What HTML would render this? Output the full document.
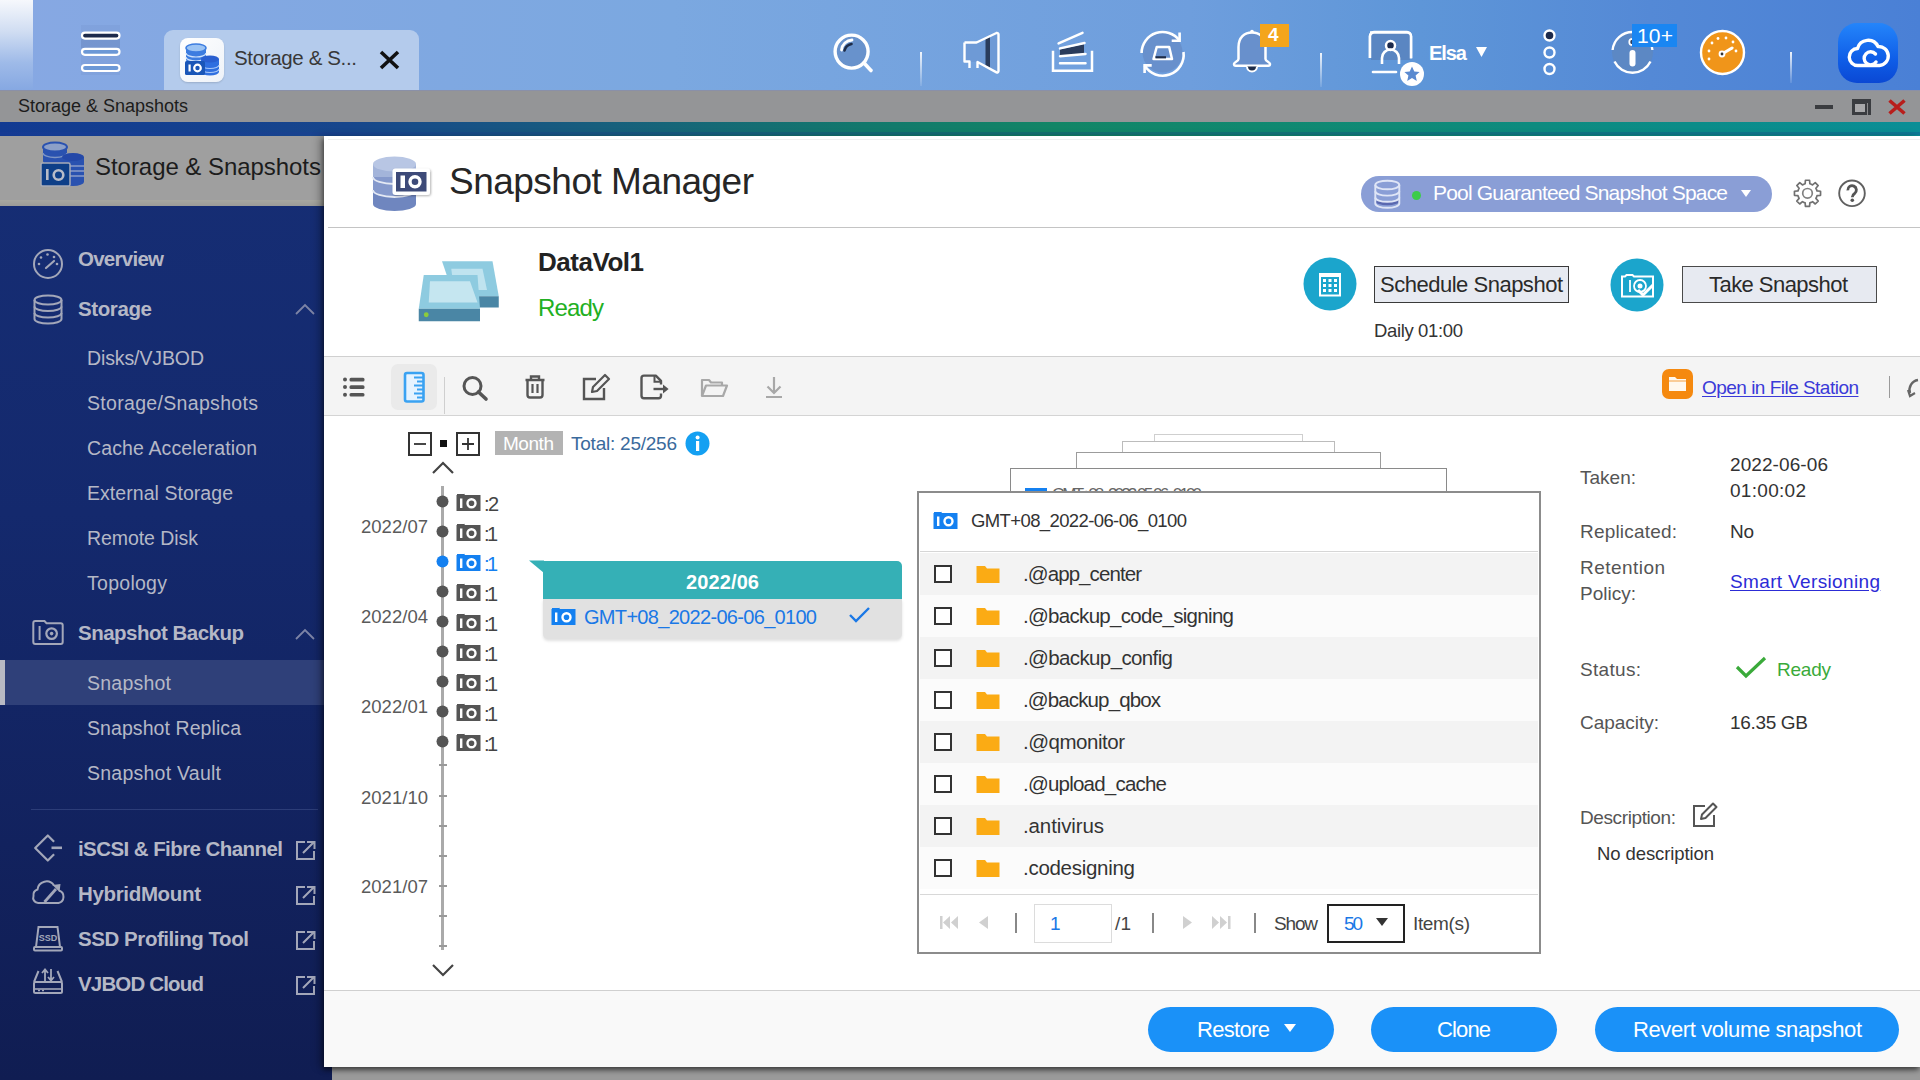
<!DOCTYPE html>
<html><head><meta charset="utf-8">
<style>
*{margin:0;padding:0;box-sizing:border-box}
html,body{width:1920px;height:1080px;overflow:hidden;background:#9a9a9a;font-family:"Liberation Sans",sans-serif;position:relative}
.a{position:absolute}
.t{position:absolute;white-space:nowrap;line-height:1}
svg{position:absolute;overflow:visible}
</style></head><body>
<div class="a" style="left:0px;top:0px;width:1920px;height:90px;background:linear-gradient(90deg,#87a8e3 0%,#7ba8e0 35%,#6e9edd 62%,#5e96d8 74%,#5489d6 86%,#4a80d6 100%);"></div>
<div class="a" style="left:0px;top:0px;width:33px;height:90px;background:linear-gradient(180deg,#f6f8fc 0%,#d0ddf2 35%,#9ebae8 70%,#86a8e2 100%);"></div>
<div class="a" style="left:81px;top:25px;width:39px;height:50px;background:rgba(40,60,110,.05);"></div>
<div class="a" style="left:81px;top:39px;width:39px;height:9px;background:rgba(40,60,110,.12);"></div>
<svg style="left:78px;top:30px;" width="46" height="46" viewBox="0 0 46 46"><rect x="4" y="2.6" width="37.5" height="6" rx="3" fill="#1c2a4c" stroke="#fff" stroke-width="2.2"/>
<rect x="4" y="18.8" width="37.5" height="6" rx="3" fill="#6c98d6" stroke="#fff" stroke-width="2.2"/>
<rect x="4" y="35" width="37.5" height="6" rx="3" fill="#6c98d6" stroke="#fff" stroke-width="2.2"/></svg>
<div class="a" style="left:164px;top:30px;width:255px;height:60px;background:#b4cbec;border-radius:9px 9px 0 0"></div>
<div class="a" style="left:180px;top:38px;width:44px;height:44px;background:linear-gradient(135deg,#ffffff,#eef2f8);border-radius:8px;box-shadow:0 1px 2px rgba(0,0,0,.15)"></div>
<svg style="left:180px;top:38px;" width="44" height="44" viewBox="0 0 44 44"><path d="M6,10 v12 a10,4 0 0 0 20,0 v-12 z" fill="#3d7de0"/>
<ellipse cx="16" cy="10" rx="10" ry="4" fill="#9cc4f4" stroke="#3d7de0" stroke-width="1.5"/>
<path d="M6,15 a10,4 0 0 0 20,0 M6,19 a10,4 0 0 0 20,0" fill="none" stroke="#cfe2fb" stroke-width="1.2"/>
<path d="M21,21 v13 a9,3.5 0 0 0 18,0 v-13 z" fill="#2f6fe0"/>
<ellipse cx="30" cy="21" rx="9" ry="3.5" fill="#2a5fd0"/>
<path d="M21,27 a9,3.5 0 0 0 18,0 M21,31 a9,3.5 0 0 0 18,0" fill="none" stroke="#a8c8f8" stroke-width="1.2"/>
<rect x="5" y="23" width="20" height="14" rx="1.5" fill="#1a56b8"/>
<rect x="8.5" y="26.5" width="2.2" height="7" fill="#fff"/><circle cx="17.5" cy="30" r="3.3" fill="none" stroke="#fff" stroke-width="2.2"/></svg>
<div id="t0" class="t" style="left:234px;top:48.25px;font-size:20.5px;color:#383838;font-weight:400;letter-spacing:-0.356px;">Storage &amp; S...</div>
<svg style="left:379px;top:50px;" width="21" height="20" viewBox="0 0 21 20"><path d="M2,2 L19,18 M19,2 L2,18" stroke="#111" stroke-width="3.6"/></svg>
<svg style="left:828px;top:28px;" width="50" height="50" viewBox="0 0 50 50"><circle cx="23.6" cy="23.6" r="16.5" fill="#6892cc" stroke="#fff" stroke-width="3.4"/>
<path d="M13.5,22 a11,11 0 0 1 10.5,-10" fill="none" stroke="#fff" stroke-width="2.8" stroke-linecap="round"/>
<path d="M16.5,22.5 a9,9 0 0 1 7,-6.5" fill="none" stroke="#1e2c48" stroke-width="2.6" stroke-linecap="round"/>
<path d="M36,35 L43,42.5" stroke="#fff" stroke-width="3.6" stroke-linecap="round"/></svg>
<div class="a" style="left:920px;top:52px;width:2px;height:34px;background:linear-gradient(180deg,rgba(255,255,255,.9),rgba(255,255,255,.1));"></div>
<svg style="left:960px;top:30px;" width="44" height="46" viewBox="0 0 44 46"><path d="M4.5,12.5 H16.5 L36.5,3 a1.5,1.5 0 0 1 2,1.4 V41 a1.5,1.5 0 0 1 -2,1.4 L17,32 H4.5 Z" fill="#6e9ad6"/>
<path d="M25.5,8 L30,6 V38 L25.5,35.5 Z" fill="#2a3c5c"/>
<path d="M4.5,12.5 H16.5 L36.5,3 a1.5,1.5 0 0 1 2,1.4 V41 a1.5,1.5 0 0 1 -2,1.4 L17.5,32 V38 M9.5,38 V31.5 H4.5 V12.5" fill="none" stroke="#fff" stroke-width="2.4" stroke-linejoin="round"/></svg>
<svg style="left:1050px;top:30px;" width="46" height="44" viewBox="0 0 46 44"><path d="M3,20.8 V40.7 H42 V20.8" fill="none" stroke="#fff" stroke-width="2.5"/>
<path d="M10,19.5 L34,14 V23.5 L10,26 Z" fill="#2a3c5c"/>
<path d="M8.6,13.4 L32.5,2.8 M10,18.4 L34.5,13 M10,26.2 L35.5,23.9 M10,33.3 H35.5" stroke="#fff" stroke-width="2.5" stroke-linecap="round"/></svg>
<svg style="left:1136px;top:26px;" width="52" height="52" viewBox="0 0 52 52"><circle cx="26.5" cy="26.5" r="20" fill="#6890cc"/>
<path d="M5.6,27 A21,21 0 0 1 43.5,14.5" fill="none" stroke="#fff" stroke-width="2.6"/>
<path d="M43.6,6.5 V14.8 H35.7" fill="none" stroke="#fff" stroke-width="2.6"/>
<path d="M47.5,26 A21,21 0 0 1 8.6,39.4" fill="none" stroke="#fff" stroke-width="2.6"/>
<path d="M8.6,47 V39.4 H15.7" fill="none" stroke="#fff" stroke-width="2.6"/>
<path d="M20.7,21 H33.2 L36,33 H17.5 Z" fill="#6890cc" stroke="#fff" stroke-width="2.5" stroke-linejoin="round"/>
<path d="M19.5,31.3 H30" stroke="#1e2c48" stroke-width="2.2"/></svg>
<svg style="left:1228px;top:28px;" width="48" height="50" viewBox="0 0 48 50"><path d="M10.5,31 V19 C10.5,9.5 16.5,4.5 24,4.5 C31.5,4.5 37.5,9.5 37.5,19 V31 C37.5,33.5 42,34 42,36 a1.8,1.8 0 0 1 -1.8,1.8 H7.8 a1.8,1.8 0 0 1 -1.8,-1.8 C6,34 10.5,33.5 10.5,31 Z" fill="#6890cc" stroke="#fff" stroke-width="2.5" stroke-linejoin="round"/>
<path d="M19,38.5 a5,5 0 0 0 10,0" fill="#1e2c48" stroke="#fff" stroke-width="2"/>
<circle cx="24" cy="3.5" r="1.8" fill="#fff"/></svg>
<div class="a" style="left:1260px;top:24px;width:29px;height:23px;background:#f4a51c;"></div>
<div id="t1" class="t" style="left:1268px;top:25.42px;font-size:19px;color:#fff;font-weight:700;">4</div>
<div class="a" style="left:1320px;top:53px;width:2px;height:34px;background:linear-gradient(180deg,rgba(255,255,255,.9),rgba(255,255,255,.1));"></div>
<svg style="left:1366px;top:28px;" width="60" height="60" viewBox="0 0 60 60"><path d="M4,30 V8 a4,4 0 0 1 4,-4 h33 a4,4 0 0 1 4,4 V30" fill="#5a86c2" stroke="#fff" stroke-width="2.5"/>
<rect x="5" y="5" width="39" height="27" fill="#5a86c2"/>
<path d="M4,4.5 h37 a4,4 0 0 1 4,4 v22 M4,30 V8.5 a4,4 0 0 1 4,-4" fill="none" stroke="#fff" stroke-width="2.5"/>
<circle cx="24.5" cy="17.5" r="4.5" fill="#1c2a4c" stroke="#fff" stroke-width="2.5"/>
<path d="M16,36 v-6 a8.5,8.5 0 0 1 17,0 v6" fill="none" stroke="#fff" stroke-width="2.6"/>
<path d="M7,44 H30" stroke="#fff" stroke-width="2.6" stroke-linecap="round"/>
<circle cx="46" cy="46" r="12" fill="#fff"/>
<path d="M46,38.5 l2.3,5 5.3,.5 -4,3.6 1.2,5.3 -4.8,-2.8 -4.8,2.8 1.2,-5.3 -4,-3.6 5.3,-.5 z" fill="#5a8ad0"/></svg>
<div id="t2" class="t" style="left:1429px;top:43.07px;font-size:20px;color:#fff;font-weight:700;letter-spacing:-1.052px;">Elsa</div>
<svg style="left:1476px;top:47px;" width="12" height="11" viewBox="0 0 12 11"><path d="M0,0 H11 L5.5,10 Z" fill="#fff"/></svg>
<svg style="left:1540px;top:26px;" width="20" height="52" viewBox="0 0 20 52"><circle cx="9.5" cy="9.5" r="5" fill="#1c2a4c" stroke="#fff" stroke-width="2.4"/>
<circle cx="9.5" cy="26.5" r="5" fill="none" stroke="#fff" stroke-width="2.4"/>
<circle cx="9.5" cy="43" r="5" fill="none" stroke="#fff" stroke-width="2.4"/></svg>
<svg style="left:1606px;top:26px;" width="54" height="54" viewBox="0 0 54 54"><circle cx="26.5" cy="26.5" r="20.5" fill="#5c88c4"/>
<path d="M6.6,24 A20,20 0 0 1 46.4,24 M44.5,35.5 A20,20 0 0 1 8.5,35.5" fill="none" stroke="#fff" stroke-width="2.4"/>
<rect x="23.5" y="24" width="6" height="16.5" rx="3" fill="#fff"/>
<circle cx="26.5" cy="16" r="3.2" fill="#2a3c5c" stroke="#fff" stroke-width="1.8"/></svg>
<div class="a" style="left:1632px;top:24px;width:45px;height:23px;background:#1a86f2;"></div>
<div id="t3" class="t" style="left:1637px;top:24.72px;font-size:21px;color:#fff;font-weight:400;letter-spacing:0.188px;">10+</div>
<svg style="left:1698px;top:28px;" width="50" height="50" viewBox="0 0 50 50"><circle cx="24.5" cy="24.5" r="21.5" fill="#f0951a" stroke="#fff" stroke-width="2.4"/>
<path d="M24,26 L34,20" stroke="#fff" stroke-width="3" stroke-linecap="round"/>
<circle cx="24" cy="26" r="3.4" fill="#fff"/><circle cx="24" cy="26" r="1.4" fill="#333"/>
<g fill="#fff"><circle cx="11" cy="23" r="1.4"/><circle cx="14" cy="15" r="1.4"/><circle cx="20" cy="10.5" r="1.4"/><circle cx="28" cy="10" r="1.4"/><circle cx="35" cy="14" r="1.4"/><circle cx="11" cy="31" r="1.4"/><circle cx="38" cy="23" r="1.4"/></g></svg>
<div class="a" style="left:1790px;top:52px;width:2px;height:31px;background:linear-gradient(180deg,rgba(255,255,255,.9),rgba(255,255,255,.1));"></div>
<div class="a" style="left:1838px;top:23px;width:60px;height:60px;background:linear-gradient(180deg,#2485fa 0%,#0f5ee8 60%,#0a48d4 100%);border-radius:19px"></div>
<svg style="left:1838px;top:23px;" width="60" height="60" viewBox="0 0 60 60"><path d="M20,42.5 a8.5,8.5 0 0 1 -0.5,-17 a11,11 0 0 1 20.5,-2 a8.5,8.5 0 0 1 1.5,19 z" fill="none" stroke="#fff" stroke-width="3.4" stroke-linejoin="round"/>
<path d="M37.5,31 a6.5,6.5 0 1 0 0.5,8" fill="none" stroke="#fff" stroke-width="3.4" stroke-linecap="round"/></svg>
<div class="a" style="left:0px;top:90px;width:1920px;height:32px;background:#949597;"></div>
<div class="a" style="left:0px;top:90px;width:1920px;height:1px;background:#8a90a8;"></div>
<div id="t4" class="t" style="left:18px;top:97.26px;font-size:18px;color:#1c1c1c;font-weight:400;letter-spacing:-0.007px;">Storage &amp; Snapshots</div>
<div class="a" style="left:1815px;top:105px;width:18px;height:4px;background:#3a3c40;"></div>
<div class="a" style="left:1852px;top:99px;width:19px;height:16px;background:#3a3c40;"></div>
<div class="a" style="left:1855px;top:104px;width:10px;height:8px;background:#a8a8aa;"></div>
<div class="a" style="left:1867px;top:103px;width:1px;height:12px;background:#8a8a8c;"></div>
<svg style="left:1886px;top:98px;" width="22" height="18" viewBox="0 0 22 18"><path d="M3.5,2.5 L18.5,15.5 M18.5,2.5 L3.5,15.5" stroke="#b81e1c" stroke-width="3.6"/></svg>
<div class="a" style="left:0px;top:122px;width:1920px;height:14px;background:linear-gradient(90deg,#123a92 0%,#17468c 18%,#17607c 32%,#12786c 45%,#128566 55%,#0f8a76 72%,#0b8c88 88%,#0a8e96 100%);"></div>
<div class="a" style="left:0px;top:132px;width:1920px;height:3px;background:rgba(30,60,150,.25);"></div>
<div class="a" style="left:0px;top:136px;width:332px;height:944px;background:linear-gradient(180deg,#162e75 0%,#14296d 40%,#12225e 75%,#101d52 100%);"></div>
<div class="a" style="left:0px;top:136px;width:324px;height:70px;background:#9f9f9f;"></div>
<div class="a" style="left:0px;top:200px;width:324px;height:6px;background:linear-gradient(180deg,#a8a8a0,#9c9c98);"></div>
<svg style="left:38px;top:140px;" width="50" height="52" viewBox="0 0 50 52"><path d="M5,7 v14 a12,4.5 0 0 0 24,0 v-14 z" fill="#2a52b0"/>
<ellipse cx="17" cy="7" rx="12" ry="4.5" fill="#8ca0c8" stroke="#2a52b0" stroke-width="2"/>
<path d="M5,13 a12,4.5 0 0 0 24,0" fill="none" stroke="#7e95c4" stroke-width="1.4"/>
<path d="M24,17 v25 a11,4 0 0 0 22,0 v-25 z" fill="#2a52b0"/>
<ellipse cx="35" cy="17" rx="11" ry="4" fill="#2448a8"/>
<path d="M32,26 h14 M32,31 h14 M32,36 h14" stroke="#8a9cc8" stroke-width="1.6"/>
<rect x="3" y="23" width="29" height="23" rx="1.5" fill="#0e3f88" stroke="#a8acb8" stroke-width="1.5"/>
<rect x="8" y="29" width="2.6" height="11" fill="#b8bcc8"/><circle cx="20.5" cy="35" r="4.8" fill="none" stroke="#b8bcc8" stroke-width="2.6"/></svg>
<div id="t5" class="t" style="left:95px;top:154.68px;font-size:24px;color:#1c1c1c;font-weight:400;letter-spacing:-0.046px;">Storage &amp; Snapshots</div>
<svg style="left:30px;top:246px;" width="36" height="36" viewBox="0 0 36 36"><circle cx="18" cy="18" r="14" fill="none" stroke="#a3a7b9" stroke-width="2"/>
<g fill="#a3a7b9"><circle cx="9" cy="18" r="1.3"/><circle cx="11" cy="11.5" r="1.3"/><circle cx="17.5" cy="8.5" r="1.3"/><circle cx="24" cy="11" r="1.3"/><circle cx="27" cy="18" r="1.3"/></g>
<path d="M16,22 L24,15" stroke="#a3a7b9" stroke-width="2.2" stroke-linecap="round"/></svg>
<div id="t6" class="t" style="left:78px;top:249.45px;font-size:20.5px;color:#b5b8c6;font-weight:700;letter-spacing:-0.739px;">Overview</div>
<svg style="left:30px;top:292px;" width="36" height="36" viewBox="0 0 36 36"><g fill="none" stroke="#a3a7b9" stroke-width="2"><ellipse cx="18" cy="8" rx="13.5" ry="4.5"/>
<path d="M4.5,8 v19 a13.5,4.5 0 0 0 27,0 v-19"/><path d="M4.5,14.5 a13.5,4.5 0 0 0 27,0 M4.5,21 a13.5,4.5 0 0 0 27,0"/></g></svg>
<div id="t7" class="t" style="left:78px;top:299.15px;font-size:20.5px;color:#b5b8c6;font-weight:700;letter-spacing:-0.388px;">Storage</div>
<svg style="left:294px;top:300px;" width="22" height="18" viewBox="0 0 22 18"><path d="M2,14 L11,5 L20,14" fill="none" stroke="#7d84a6" stroke-width="1.8"/></svg>
<div id="t8" class="t" style="left:87px;top:349.49px;font-size:19.5px;color:#b5b8c6;font-weight:400;letter-spacing:-0.111px;">Disks/VJBOD</div>
<div id="t9" class="t" style="left:87px;top:394.49px;font-size:19.5px;color:#b5b8c6;font-weight:400;letter-spacing:0.320px;">Storage/Snapshots</div>
<div id="t10" class="t" style="left:87px;top:439.49px;font-size:19.5px;color:#b5b8c6;font-weight:400;letter-spacing:0.116px;">Cache Acceleration</div>
<div id="t11" class="t" style="left:87px;top:484.49px;font-size:19.5px;color:#b5b8c6;font-weight:400;letter-spacing:0.049px;">External Storage</div>
<div id="t12" class="t" style="left:87px;top:529.49px;font-size:19.5px;color:#b5b8c6;font-weight:400;letter-spacing:-0.062px;">Remote Disk</div>
<div id="t13" class="t" style="left:87px;top:574.49px;font-size:19.5px;color:#b5b8c6;font-weight:400;letter-spacing:0.277px;">Topology</div>
<svg style="left:30px;top:618px;" width="36" height="30" viewBox="0 0 36 30"><path d="M3.3,24 V5 a2,2 0 0 1 2,-2 H14.5 l2,2.2 H30.7 a2,2 0 0 1 2,2 V24 a2,2 0 0 1 -2,2 H5.3 a2,2 0 0 1 -2,-2 Z" fill="none" stroke="#a3a7b9" stroke-width="2"/>
<path d="M9.6,8 V22" stroke="#a3a7b9" stroke-width="2"/><circle cx="21.6" cy="15.6" r="5.3" fill="none" stroke="#a3a7b9" stroke-width="2.2"/><circle cx="21.6" cy="15.6" r="1.8" fill="#a3a7b9"/></svg>
<div id="t14" class="t" style="left:78px;top:623.15px;font-size:20.5px;color:#b5b8c6;font-weight:700;letter-spacing:-0.510px;">Snapshot Backup</div>
<svg style="left:294px;top:625px;" width="22" height="18" viewBox="0 0 22 18"><path d="M2,14 L11,5 L20,14" fill="none" stroke="#7d84a6" stroke-width="1.8"/></svg>
<div class="a" style="left:0px;top:660px;width:324px;height:45px;background:#2f4079;"></div>
<div class="a" style="left:0px;top:660px;width:5px;height:45px;background:#b8bac4;"></div>
<div id="t15" class="t" style="left:87px;top:674.49px;font-size:19.5px;color:#b5b8c6;font-weight:400;letter-spacing:0.228px;">Snapshot</div>
<div id="t16" class="t" style="left:87px;top:719.49px;font-size:19.5px;color:#b5b8c6;font-weight:400;letter-spacing:0.076px;">Snapshot Replica</div>
<div id="t17" class="t" style="left:87px;top:764.49px;font-size:19.5px;color:#b5b8c6;font-weight:400;letter-spacing:0.244px;">Snapshot Vault</div>
<div class="a" style="left:31px;top:809px;width:287px;height:1px;background:#2c3d78;"></div>
<svg style="left:30px;top:832px;" width="36" height="32" viewBox="0 0 36 32"><path d="M24.1,9.8 L17.8,3.5 L5.2,16 L17.8,28.5 L24.1,22.2" fill="none" stroke="#a3a7b9" stroke-width="2.2" stroke-linejoin="round"/>
<path d="M21.5,15.8 H32" stroke="#a3a7b9" stroke-width="2.6"/></svg>
<div id="t18" class="t" style="left:78px;top:839.15px;font-size:20.5px;color:#b5b8c6;font-weight:700;letter-spacing:-0.571px;">iSCSI &amp; Fibre Channel</div>
<svg style="left:30px;top:876px;" width="36" height="32" viewBox="0 0 36 32"><path d="M8,27 a5.2,5.2 0 0 1 -4.5,-7 a6,6 0 0 1 4,-6.5 a9,9 0 0 1 16.5,-4 M29,14.5 a6.5,6.5 0 0 1 -0.5,12.5 H8" fill="none" stroke="#a3a7b9" stroke-width="2"/>
<path d="M14.5,26 L26,13" stroke="#a3a7b9" stroke-width="2.8"/><path d="M22.5,9 L30.5,8 L29.5,16 Z" fill="#a3a7b9"/></svg>
<div id="t19" class="t" style="left:78px;top:884.15px;font-size:20.5px;color:#b5b8c6;font-weight:700;letter-spacing:-0.341px;">HybridMount</div>
<svg style="left:30px;top:922px;" width="36" height="32" viewBox="0 0 36 32"><path d="M6,25 L8.5,5 H27.5 L30,25 Z" fill="none" stroke="#a3a7b9" stroke-width="2"/>
<rect x="4" y="25" width="28" height="3.5" rx="1" fill="none" stroke="#a3a7b9" stroke-width="2"/>
<text x="18" y="19" font-size="9" font-weight="700" text-anchor="middle" fill="#a3a7b9" font-family="Liberation Sans">SSD</text></svg>
<div id="t20" class="t" style="left:78px;top:929.15px;font-size:20.5px;color:#b5b8c6;font-weight:700;letter-spacing:-0.437px;">SSD Profiling Tool</div>
<svg style="left:30px;top:964px;" width="36" height="34" viewBox="0 0 36 34"><path d="M4,18 L8.5,7 M32,18 L27.5,7" fill="none" stroke="#a3a7b9" stroke-width="2"/>
<rect x="4" y="18" width="28" height="11" rx="1.5" fill="none" stroke="#a3a7b9" stroke-width="2"/>
<path d="M4,25 H32" stroke="#a3a7b9" stroke-width="1.6"/>
<path d="M15,17 V6 M12,9 L15,5.5 L18,9 M21,5 V16 M18,13 L21,16.5 L24,13" fill="none" stroke="#a3a7b9" stroke-width="1.8"/>
<path d="M8,26.5 h2 M12,26.5 h2" stroke="#a3a7b9" stroke-width="1.5"/></svg>
<div id="t21" class="t" style="left:78px;top:974.45px;font-size:20.5px;color:#b5b8c6;font-weight:700;letter-spacing:-0.841px;">VJBOD Cloud</div>
<svg style="left:294px;top:839px;" width="24" height="22" viewBox="0 0 24 22"><path d="M11,3 H3 V20 H20 V12" fill="none" stroke="#a3a7b9" stroke-width="2"/><path d="M9,14 L20,3 M13,3 H20.5 V10" fill="none" stroke="#a3a7b9" stroke-width="2"/></svg>
<svg style="left:294px;top:884px;" width="24" height="22" viewBox="0 0 24 22"><path d="M11,3 H3 V20 H20 V12" fill="none" stroke="#a3a7b9" stroke-width="2"/><path d="M9,14 L20,3 M13,3 H20.5 V10" fill="none" stroke="#a3a7b9" stroke-width="2"/></svg>
<svg style="left:294px;top:929px;" width="24" height="22" viewBox="0 0 24 22"><path d="M11,3 H3 V20 H20 V12" fill="none" stroke="#a3a7b9" stroke-width="2"/><path d="M9,14 L20,3 M13,3 H20.5 V10" fill="none" stroke="#a3a7b9" stroke-width="2"/></svg>
<svg style="left:294px;top:974px;" width="24" height="22" viewBox="0 0 24 22"><path d="M11,3 H3 V20 H20 V12" fill="none" stroke="#a3a7b9" stroke-width="2"/><path d="M9,14 L20,3 M13,3 H20.5 V10" fill="none" stroke="#a3a7b9" stroke-width="2"/></svg>
<div class="a" style="left:324px;top:136px;width:1596px;height:931px;background:#fff;box-shadow:-1px 3px 5px rgba(0,0,0,.55),-6px 0 8px rgba(0,0,0,.18)"></div>
<div class="a" style="left:328px;top:139px;width:1592px;height:1px;background:#f0f0f0;"></div>
<svg style="left:368px;top:150px;" width="72" height="62" viewBox="0 0 72 62"><defs><filter id="sh" x="-20%" y="-20%" width="140%" height="140%"><feDropShadow dx="1" dy="1" stdDeviation="1.2" flood-opacity=".3"/></filter></defs>
<path d="M5,14 v40 a21.5,7 0 0 0 43,0 v-40 z" fill="#6f86bf"/>
<path d="M5,14 v13 a21.5,7 0 0 0 43,0 v-13 z" fill="#a3b4da"/>
<path d="M5,27 v13 a21.5,7 0 0 0 43,0 v-13 z" fill="#8599cc"/>
<ellipse cx="26.5" cy="14" rx="21.5" ry="7.5" fill="#b8c6e4"/>
<path d="M5,27 a21.5,7 0 0 0 43,0 M5,40 a21.5,7 0 0 0 43,0" fill="none" stroke="#e4e9f4" stroke-width="1.8"/>
<g filter="url(#sh)"><rect x="24.5" y="18.5" width="37.5" height="26.5" rx="3" fill="#fff"/></g>
<rect x="28" y="22" width="30.5" height="19.5" fill="#3d4a78"/>
<rect x="32.5" y="25.5" width="4.5" height="12.5" fill="#fff"/><circle cx="47" cy="31.7" r="5" fill="none" stroke="#fff" stroke-width="3.4"/></svg>
<div id="t22" class="t" style="left:449px;top:163.28px;font-size:37px;color:#262626;font-weight:400;letter-spacing:-0.511px;">Snapshot Manager</div>
<div class="a" style="left:1361px;top:176px;width:411px;height:36px;background:#8a9ed6;border-radius:18px"></div>
<svg style="left:1372px;top:179px;" width="30" height="30" viewBox="0 0 30 30"><path d="M3.3,18.5 a12,4.3 0 0 0 24,0 v3.5 a12,4.3 0 0 1 -24,0 z" fill="#5a68b0"/>
<g fill="none" stroke="#dfe5f6" stroke-width="1.9"><ellipse cx="15.3" cy="6" rx="12" ry="4.3"/><path d="M3.3,6 v18.5 a12,4.3 0 0 0 24,0 v-18.5"/>
<path d="M3.3,12.3 a12,4.3 0 0 0 24,0 M3.3,18.5 a12,4.3 0 0 0 24,0"/></g></svg>
<svg style="left:1410px;top:189px;" width="14" height="14" viewBox="0 0 14 14"><circle cx="6.5" cy="6.5" r="4.5" fill="#3ccc4a"/></svg>
<div id="t23" class="t" style="left:1433px;top:182.22px;font-size:21px;color:#fff;font-weight:400;letter-spacing:-0.818px;">Pool Guaranteed Snapshot Space</div>
<svg style="left:1741px;top:190px;" width="11" height="8" viewBox="0 0 11 8"><path d="M0,0 H10 L5,7 Z" fill="#fff"/></svg>
<svg style="left:1790px;top:177px;" width="34" height="34" viewBox="0 0 34 34"><path d="M13.83,7.21 L15.13,6.79 L15.44,3.26 L19.56,3.26 L19.87,6.79 L21.33,7.28 L22.55,7.90 L25.26,5.62 L28.18,8.54 L25.90,11.25 L26.59,12.63 L27.01,13.93 L30.54,14.24 L30.54,18.36 L27.01,18.67 L26.52,20.13 L25.90,21.35 L28.18,24.06 L25.26,26.98 L22.55,24.70 L21.17,25.39 L19.87,25.81 L19.56,29.34 L15.44,29.34 L15.13,25.81 L13.67,25.32 L12.45,24.70 L9.74,26.98 L6.82,24.06 L9.10,21.35 L8.41,19.97 L7.99,18.67 L4.46,18.36 L4.46,14.24 L7.99,13.93 L8.48,12.47 L9.10,11.25 L6.82,8.54 L9.74,5.62 L12.45,7.90 Z" fill="none" stroke="#707070" stroke-width="1.7" stroke-linejoin="round"/>
<circle cx="17.5" cy="16.3" r="4.8" fill="none" stroke="#808080" stroke-width="1.7"/></svg>
<svg style="left:1836px;top:178px;" width="32" height="32" viewBox="0 0 32 32"><circle cx="16" cy="15.3" r="12.8" fill="none" stroke="#606060" stroke-width="1.9"/>
<path d="M11.8,12.3 a4.3,4.3 0 1 1 6.8,3.2 c-1.6,1 -2.3,1.8 -2.3,3.8" fill="none" stroke="#555" stroke-width="2.8"/><circle cx="16.3" cy="22.2" r="1.8" fill="#555"/></svg>
<div class="a" style="left:328px;top:227px;width:1592px;height:1px;background:#c4c4c4;"></div>
<svg style="left:414px;top:256px;" width="92" height="70" viewBox="0 0 92 70"><path d="M28,5.25 H78.5 L84.75,40.25 H40 Z" fill="#8ecbe0"/>
<path d="M37.25,12.75 H68.5 L73,34 H40 Z" fill="#bfe3ef"/>
<rect x="64.75" y="40.25" width="20" height="11.25" fill="#4a86a5"/>
<path d="M9.75,19 H63.5 L66,52.75 H4.75 Z" fill="#8ecbe0"/>
<path d="M16,25.25 H56 L63.5,46.5 H14.75 Z" fill="#c5e6f0"/>
<rect x="4.75" y="52.75" width="61.25" height="12.5" fill="#4a86a5"/>
<circle cx="12.25" cy="58.75" r="2.4" fill="#8ccc3a"/></svg>
<div id="t24" class="t" style="left:538px;top:248.99px;font-size:26px;color:#222;font-weight:700;letter-spacing:-0.478px;">DataVol1</div>
<div id="t25" class="t" style="left:538px;top:295.68px;font-size:24px;color:#22b022;font-weight:400;letter-spacing:-0.844px;">Ready</div>
<svg style="left:1303px;top:257px;" width="54" height="54" viewBox="0 0 54 54"><circle cx="27" cy="27" r="26.5" fill="#1ba5cc"/>
<rect x="17" y="17.5" width="20" height="21" fill="none" stroke="#fff" stroke-width="2"/><rect x="16" y="16" width="22" height="4" fill="#fff"/>
<g fill="#fff"><rect x="20" y="22" width="3" height="3"/><rect x="25.5" y="22" width="3" height="3"/><rect x="31" y="22" width="3" height="3"/>
<rect x="20" y="27" width="3" height="3"/><rect x="25.5" y="27" width="3" height="3"/><rect x="31" y="27" width="3" height="3"/>
<rect x="20" y="32" width="3" height="3"/><rect x="25.5" y="32" width="3" height="3"/><rect x="31" y="32" width="3" height="3"/></g></svg>
<div class="a" style="left:1374px;top:266px;width:195px;height:37px;background:#e7eaf1;border:1.6px solid #3a3a3a"></div>
<div id="t26" class="t" style="left:1380px;top:274.38px;font-size:22px;color:#2a2a2a;font-weight:400;letter-spacing:-0.489px;">Schedule Snapshot</div>
<div id="t27" class="t" style="left:1374px;top:322.34px;font-size:18.5px;color:#333;font-weight:400;letter-spacing:-0.356px;">Daily 01:00</div>
<svg style="left:1610px;top:258px;" width="54" height="54" viewBox="0 0 54 54"><circle cx="27" cy="27" r="26.5" fill="#1ba5cc"/>
<path d="M12,18.5 v20 h31 v-20 h-19 l-1.5,-1.5 h-6 l-1.5,1.5 z" fill="none" stroke="#fff" stroke-width="2"/>
<path d="M20,22 v12" stroke="#fff" stroke-width="1.8"/>
<circle cx="30" cy="28" r="6" fill="none" stroke="#fff" stroke-width="1.8"/><circle cx="30" cy="28" r="2.5" fill="#fff"/>
<path d="M28,32 l5,5 l10,-10" fill="none" stroke="#fff" stroke-width="3"/></svg>
<div class="a" style="left:1682px;top:266px;width:195px;height:37px;background:#e7eaf1;border:1.6px solid #4a4a4a"></div>
<div id="t28" class="t" style="left:1709px;top:274.38px;font-size:22px;color:#2a2a2a;font-weight:400;letter-spacing:-0.546px;">Take Snapshot</div>
<div class="a" style="left:324px;top:356px;width:1596px;height:1px;background:#d0d0d0;"></div>
<div class="a" style="left:324px;top:357px;width:1596px;height:58px;background:#f4f4f4;"></div>
<div class="a" style="left:324px;top:415px;width:1596px;height:1px;background:#d4d4d4;"></div>
<svg style="left:340px;top:372px;" width="28" height="28" viewBox="0 0 28 28"><g fill="#555"><circle cx="5" cy="7.5" r="2"/><circle cx="5" cy="15" r="2"/><circle cx="5" cy="22.7" r="2"/>
<rect x="9.5" y="5.8" width="15" height="3.6" rx="1.5"/><rect x="9.5" y="13.3" width="15" height="3.6" rx="1.5"/><rect x="9.5" y="21" width="15" height="3.6" rx="1.5"/></g></svg>
<div class="a" style="left:391px;top:364px;width:46px;height:46px;background:#eaeaea;border-radius:7px"></div>
<svg style="left:400px;top:370px;" width="28" height="34" viewBox="0 0 28 34"><rect x="5" y="3" width="18.5" height="28.5" rx="2" fill="#e6f3ff" stroke="#3aa2f2" stroke-width="2.6"/>
<path d="M23,7.5 h-9 M23,11.5 h-6 M23,15.5 h-9 M23,19.5 h-6 M23,23.5 h-9 M23,27.5 h-6" stroke="#3aa2f2" stroke-width="2.2"/></svg>
<div class="a" style="left:444px;top:377px;width:1px;height:37px;background:#cfcfcf;"></div>
<svg style="left:460px;top:374px;" width="32" height="28" viewBox="0 0 32 28"><circle cx="12.5" cy="12" r="8.5" fill="none" stroke="#555" stroke-width="3"/><path d="M18.5,18 L26,25" stroke="#555" stroke-width="3.6" stroke-linecap="round"/></svg>
<svg style="left:520px;top:372px;" width="30" height="30" viewBox="0 0 30 30"><path d="M5.5,8 h19 M11,8 V4.5 h8 V8" fill="none" stroke="#555" stroke-width="2.4"/>
<path d="M7.5,8 V23 a2.5,2.5 0 0 0 2.5,2.5 h10 a2.5,2.5 0 0 0 2.5,-2.5 V8" fill="none" stroke="#555" stroke-width="2.4"/>
<path d="M12.5,12 V21 M17.5,12 V21" stroke="#555" stroke-width="2.2"/></svg>
<svg style="left:579px;top:372px;" width="34" height="32" viewBox="0 0 34 32"><path d="M17,7 H5 V27 H25 V16" fill="none" stroke="#555" stroke-width="2.4"/>
<path d="M13,20 l1,-5 l12,-12 l4,4 l-12,12 z" fill="none" stroke="#555" stroke-width="2.2" stroke-linejoin="round"/></svg>
<svg style="left:638px;top:372px;" width="34" height="30" viewBox="0 0 34 30"><path d="M23,12.5 V8.8 L17.8,3.6 H6 a2.5,2.5 0 0 0 -2.5,2.5 V23.7 a2.5,2.5 0 0 0 2.5,2.5 H20.5 a2.5,2.5 0 0 0 2.5,-2.5 V21.5" fill="none" stroke="#555" stroke-width="2.4" stroke-linejoin="round"/>
<path d="M16.5,3.8 V9.8 H23" fill="none" stroke="#555" stroke-width="2"/>
<path d="M15.5,17 H26" stroke="#555" stroke-width="2.4"/><path d="M25,12.5 L30.6,17 L25,21.5 Z" fill="#555"/></svg>
<svg style="left:698px;top:374px;" width="34" height="28" viewBox="0 0 34 28"><path d="M4,22 V6 H11 l2,2.5 H24 V11" fill="none" stroke="#a8a8a8" stroke-width="2.2" stroke-linejoin="round"/>
<path d="M4,22 L8,11.5 H29 L25,22 Z" fill="none" stroke="#a8a8a8" stroke-width="2.2" stroke-linejoin="round"/></svg>
<svg style="left:762px;top:374px;" width="26" height="28" viewBox="0 0 26 28"><path d="M12,3 V19 M5.5,12.5 L12,19 L18.5,12.5 M4,23 H20" fill="none" stroke="#a8a8a8" stroke-width="2.2"/></svg>
<div class="a" style="left:1662px;top:369px;width:31px;height:30px;background:#f5890f;border-radius:7px"></div>
<svg style="left:1662px;top:369px;" width="31" height="30" viewBox="0 0 31 30"><path d="M7,22 V8 h6 l2,2 h9 v12 z" fill="#fff8ee"/><path d="M7,12 h17" stroke="#f5a040" stroke-width="1"/></svg>
<div id="t29" class="t" style="left:1702px;top:377.92px;font-size:19px;color:#3a3ad8;font-weight:400;letter-spacing:-0.520px;text-decoration:underline;text-underline-offset:2px">Open in File Station</div>
<div class="a" style="left:1889px;top:376px;width:1px;height:22px;background:#9a9a9a;"></div>
<svg style="left:1900px;top:374px;" width="20" height="28" viewBox="0 0 20 28"><path d="M18,6 a10,10 0 0 0 -8,13" fill="none" stroke="#666" stroke-width="2.4"/><path d="M8,16 l2,6 l5,-3" fill="none" stroke="#666" stroke-width="2.2"/></svg>
<svg style="left:406px;top:430px;" width="76" height="28" viewBox="0 0 76 28"><rect x="3" y="3" width="22" height="22" fill="none" stroke="#333" stroke-width="2"/><path d="M8,14 H20" stroke="#333" stroke-width="1.8"/>
<rect x="34" y="10" width="7" height="7" fill="#111"/>
<rect x="51" y="3" width="22" height="22" fill="none" stroke="#333" stroke-width="2"/><path d="M56,14 H68 M62,8 V20" stroke="#333" stroke-width="1.8"/></svg>
<div class="a" style="left:495px;top:431px;width:68px;height:24px;background:#b3b3b3;"></div>
<div id="t30" class="t" style="left:503px;top:433.92px;font-size:19px;color:#fff;font-weight:400;letter-spacing:-0.453px;">Month</div>
<div id="t31" class="t" style="left:571px;top:433.92px;font-size:19px;color:#3a6a9c;font-weight:400;letter-spacing:-0.234px;">Total: 25/256</div>
<svg style="left:685px;top:431px;" width="26" height="26" viewBox="0 0 26 26"><circle cx="12.5" cy="12.5" r="12" fill="#14a0f2"/><rect x="11" y="10" width="3.2" height="10" fill="#fff"/><circle cx="12.6" cy="6.5" r="2" fill="#fff"/></svg>
<svg style="left:430px;top:458px;" width="26" height="20" viewBox="0 0 26 20"><path d="M3,15 L13,5 L23,15" fill="none" stroke="#444" stroke-width="2.2"/></svg>
<div class="a" style="left:441px;top:486px;width:3px;height:464px;background:#aaaaaa;"></div>
<div class="a" style="left:439px;top:764px;width:8px;height:2px;background:#999;"></div>
<div class="a" style="left:439px;top:795px;width:8px;height:2px;background:#999;"></div>
<div class="a" style="left:439px;top:825px;width:8px;height:2px;background:#999;"></div>
<div class="a" style="left:439px;top:855px;width:8px;height:2px;background:#999;"></div>
<div class="a" style="left:439px;top:885px;width:8px;height:2px;background:#999;"></div>
<div class="a" style="left:439px;top:915px;width:8px;height:2px;background:#999;"></div>
<div class="a" style="left:439px;top:945px;width:8px;height:2px;background:#999;"></div>
<svg style="left:436px;top:494.5px;" width="13" height="13" viewBox="0 0 13 13"><circle cx="6.5" cy="6.5" r="6" fill="#555"/></svg>
<svg style="left:456px;top:492.5px;" width="25" height="18" viewBox="0 0 25 18"><path d="M0.5,2 h7.5 l1,-1.5 v1.5 h15.5 v16 h-24 z" fill="#555"/><path d="M1,1 h7 v2 h-7 z" fill="#555"/><rect x="4" y="5.5" width="2.4" height="9.5" fill="#fff"/><circle cx="15.5" cy="10.2" r="4" fill="none" stroke="#fff" stroke-width="2.4"/></svg>
<div id="t32" class="t" style="left:484px;top:494.07px;font-size:20px;color:#444;font-weight:400;">:</div>
<div id="t33" class="t" style="left:488px;top:494.07px;font-size:20px;color:#444;font-weight:400;">2</div>
<svg style="left:436px;top:524.5px;" width="13" height="13" viewBox="0 0 13 13"><circle cx="6.5" cy="6.5" r="6" fill="#555"/></svg>
<svg style="left:456px;top:522.5px;" width="25" height="18" viewBox="0 0 25 18"><path d="M0.5,2 h7.5 l1,-1.5 v1.5 h15.5 v16 h-24 z" fill="#555"/><path d="M1,1 h7 v2 h-7 z" fill="#555"/><rect x="4" y="5.5" width="2.4" height="9.5" fill="#fff"/><circle cx="15.5" cy="10.2" r="4" fill="none" stroke="#fff" stroke-width="2.4"/></svg>
<div id="t34" class="t" style="left:484px;top:524.07px;font-size:20px;color:#444;font-weight:400;">:</div>
<div id="t35" class="t" style="left:487px;top:524.07px;font-size:20px;color:#444;font-weight:400;">1</div>
<svg style="left:436px;top:554.5px;" width="13" height="13" viewBox="0 0 13 13"><circle cx="6.5" cy="6.5" r="6" fill="#1480f0"/></svg>
<svg style="left:456px;top:552.5px;" width="25" height="18" viewBox="0 0 25 18"><path d="M0.5,2 h7.5 l1,-1.5 v1.5 h15.5 v16 h-24 z" fill="#1480f0"/><path d="M1,1 h7 v2 h-7 z" fill="#1480f0"/><rect x="4" y="5.5" width="2.4" height="9.5" fill="#fff"/><circle cx="15.5" cy="10.2" r="4" fill="none" stroke="#fff" stroke-width="2.4"/></svg>
<div id="t36" class="t" style="left:484px;top:554.07px;font-size:20px;color:#1480f0;font-weight:400;">:</div>
<div id="t37" class="t" style="left:487px;top:554.07px;font-size:20px;color:#1480f0;font-weight:400;">1</div>
<svg style="left:436px;top:584.5px;" width="13" height="13" viewBox="0 0 13 13"><circle cx="6.5" cy="6.5" r="6" fill="#555"/></svg>
<svg style="left:456px;top:582.5px;" width="25" height="18" viewBox="0 0 25 18"><path d="M0.5,2 h7.5 l1,-1.5 v1.5 h15.5 v16 h-24 z" fill="#555"/><path d="M1,1 h7 v2 h-7 z" fill="#555"/><rect x="4" y="5.5" width="2.4" height="9.5" fill="#fff"/><circle cx="15.5" cy="10.2" r="4" fill="none" stroke="#fff" stroke-width="2.4"/></svg>
<div id="t38" class="t" style="left:484px;top:584.07px;font-size:20px;color:#444;font-weight:400;">:</div>
<div id="t39" class="t" style="left:487px;top:584.07px;font-size:20px;color:#444;font-weight:400;">1</div>
<svg style="left:436px;top:614.5px;" width="13" height="13" viewBox="0 0 13 13"><circle cx="6.5" cy="6.5" r="6" fill="#555"/></svg>
<svg style="left:456px;top:612.5px;" width="25" height="18" viewBox="0 0 25 18"><path d="M0.5,2 h7.5 l1,-1.5 v1.5 h15.5 v16 h-24 z" fill="#555"/><path d="M1,1 h7 v2 h-7 z" fill="#555"/><rect x="4" y="5.5" width="2.4" height="9.5" fill="#fff"/><circle cx="15.5" cy="10.2" r="4" fill="none" stroke="#fff" stroke-width="2.4"/></svg>
<div id="t40" class="t" style="left:484px;top:614.07px;font-size:20px;color:#444;font-weight:400;">:</div>
<div id="t41" class="t" style="left:487px;top:614.07px;font-size:20px;color:#444;font-weight:400;">1</div>
<svg style="left:436px;top:644.5px;" width="13" height="13" viewBox="0 0 13 13"><circle cx="6.5" cy="6.5" r="6" fill="#555"/></svg>
<svg style="left:456px;top:642.5px;" width="25" height="18" viewBox="0 0 25 18"><path d="M0.5,2 h7.5 l1,-1.5 v1.5 h15.5 v16 h-24 z" fill="#555"/><path d="M1,1 h7 v2 h-7 z" fill="#555"/><rect x="4" y="5.5" width="2.4" height="9.5" fill="#fff"/><circle cx="15.5" cy="10.2" r="4" fill="none" stroke="#fff" stroke-width="2.4"/></svg>
<div id="t42" class="t" style="left:484px;top:644.07px;font-size:20px;color:#444;font-weight:400;">:</div>
<div id="t43" class="t" style="left:487px;top:644.07px;font-size:20px;color:#444;font-weight:400;">1</div>
<svg style="left:436px;top:674.5px;" width="13" height="13" viewBox="0 0 13 13"><circle cx="6.5" cy="6.5" r="6" fill="#555"/></svg>
<svg style="left:456px;top:672.5px;" width="25" height="18" viewBox="0 0 25 18"><path d="M0.5,2 h7.5 l1,-1.5 v1.5 h15.5 v16 h-24 z" fill="#555"/><path d="M1,1 h7 v2 h-7 z" fill="#555"/><rect x="4" y="5.5" width="2.4" height="9.5" fill="#fff"/><circle cx="15.5" cy="10.2" r="4" fill="none" stroke="#fff" stroke-width="2.4"/></svg>
<div id="t44" class="t" style="left:484px;top:674.07px;font-size:20px;color:#444;font-weight:400;">:</div>
<div id="t45" class="t" style="left:487px;top:674.07px;font-size:20px;color:#444;font-weight:400;">1</div>
<svg style="left:436px;top:704.5px;" width="13" height="13" viewBox="0 0 13 13"><circle cx="6.5" cy="6.5" r="6" fill="#555"/></svg>
<svg style="left:456px;top:702.5px;" width="25" height="18" viewBox="0 0 25 18"><path d="M0.5,2 h7.5 l1,-1.5 v1.5 h15.5 v16 h-24 z" fill="#555"/><path d="M1,1 h7 v2 h-7 z" fill="#555"/><rect x="4" y="5.5" width="2.4" height="9.5" fill="#fff"/><circle cx="15.5" cy="10.2" r="4" fill="none" stroke="#fff" stroke-width="2.4"/></svg>
<div id="t46" class="t" style="left:484px;top:704.07px;font-size:20px;color:#444;font-weight:400;">:</div>
<div id="t47" class="t" style="left:487px;top:704.07px;font-size:20px;color:#444;font-weight:400;">1</div>
<svg style="left:436px;top:734.5px;" width="13" height="13" viewBox="0 0 13 13"><circle cx="6.5" cy="6.5" r="6" fill="#555"/></svg>
<svg style="left:456px;top:732.5px;" width="25" height="18" viewBox="0 0 25 18"><path d="M0.5,2 h7.5 l1,-1.5 v1.5 h15.5 v16 h-24 z" fill="#555"/><path d="M1,1 h7 v2 h-7 z" fill="#555"/><rect x="4" y="5.5" width="2.4" height="9.5" fill="#fff"/><circle cx="15.5" cy="10.2" r="4" fill="none" stroke="#fff" stroke-width="2.4"/></svg>
<div id="t48" class="t" style="left:484px;top:734.07px;font-size:20px;color:#444;font-weight:400;">:</div>
<div id="t49" class="t" style="left:487px;top:734.07px;font-size:20px;color:#444;font-weight:400;">1</div>
<div id="t50" class="t" style="left:361px;top:518.34px;font-size:18.5px;color:#5a5a5a;font-weight:400;letter-spacing:0.021px;">2022/07</div>
<div id="t51" class="t" style="left:361px;top:608.34px;font-size:18.5px;color:#5a5a5a;font-weight:400;letter-spacing:0.021px;">2022/04</div>
<div id="t52" class="t" style="left:361px;top:698.34px;font-size:18.5px;color:#5a5a5a;font-weight:400;letter-spacing:0.021px;">2022/01</div>
<div id="t53" class="t" style="left:361px;top:789.34px;font-size:18.5px;color:#5a5a5a;font-weight:400;letter-spacing:0.021px;">2021/10</div>
<div id="t54" class="t" style="left:361px;top:878.34px;font-size:18.5px;color:#5a5a5a;font-weight:400;letter-spacing:0.021px;">2021/07</div>
<svg style="left:430px;top:960px;" width="26" height="20" viewBox="0 0 26 20"><path d="M3,5 L13,15 L23,5" fill="none" stroke="#444" stroke-width="2.2"/></svg>
<div class="a" style="left:543px;top:599px;width:359px;height:40px;background:#e1e1e1;border-radius:0 0 5px 5px;box-shadow:0 2px 3px rgba(0,0,0,.12)"></div>
<div class="a" style="left:543px;top:561px;width:359px;height:38px;background:#35b0b6;border-radius:0 5px 0 0"></div>
<svg style="left:529px;top:560px;" width="16" height="14" viewBox="0 0 16 14"><path d="M0,0.5 H15 V13 Z" fill="#35b0b6"/></svg>
<div id="t55" class="t" style="left:686px;top:572.07px;font-size:20px;color:#fff;font-weight:700;letter-spacing:0.117px;">2022/06</div>
<svg style="left:551px;top:607px;" width="26" height="19" viewBox="0 0 26 19"><path d="M0.5,2 h7.5 l1,-1.5 v1.5 h15.5 v16 h-24 z" fill="#1480f0"/><path d="M1,1 h7 v2 h-7 z" fill="#1480f0"/><rect x="4" y="5.5" width="2.4" height="9.5" fill="#fff"/><circle cx="15.5" cy="10.2" r="4" fill="none" stroke="#fff" stroke-width="2.4"/></svg>
<div id="t56" class="t" style="left:584px;top:607.07px;font-size:20px;color:#1a78e6;font-weight:400;letter-spacing:-0.686px;">GMT+08_2022-06-06_0100</div>
<svg style="left:847px;top:605px;" width="26" height="20" viewBox="0 0 26 20"><path d="M3,10 L9,16 L22,3" fill="none" stroke="#1a78e6" stroke-width="2.4"/></svg>
<div class="a" style="left:1154px;top:434px;width:149px;height:30px;border:1px solid #cfcfcf;border-bottom:none;background:#fff"></div>
<div class="a" style="left:1122px;top:441px;width:213px;height:30px;border:1px solid #bcbcbc;border-bottom:none;background:#fff"></div>
<div class="a" style="left:1076px;top:452px;width:305px;height:30px;border:1.5px solid #9c9c9c;border-bottom:none;background:#fff"></div>
<div class="a" style="left:1010px;top:468px;width:437px;height:40px;border:1.5px solid #8a8a8a;border-bottom:none;background:#fff;overflow:hidden"></div>
<svg style="left:1025px;top:486px;" width="22" height="8" viewBox="0 0 22 8"><rect x="0" y="2" width="22" height="6" fill="#1480f0"/></svg>
<div id="t57" class="t" style="left:1052px;top:485.61px;font-size:17px;color:#666;font-weight:400;letter-spacing:-2.871px;">GMT+08_2022-05-06_0100</div>
<div class="a" style="left:917px;top:491px;width:624px;height:463px;border:2px solid #8c8c8c;background:#fff"></div>
<svg style="left:933px;top:511px;" width="25" height="19" viewBox="0 0 25 19"><path d="M0.5,2 h7.5 l1,-1.5 v1.5 h15.5 v16 h-24 z" fill="#1480f0"/><path d="M1,1 h7 v2 h-7 z" fill="#1480f0"/><rect x="4" y="5.5" width="2.4" height="9.5" fill="#fff"/><circle cx="15.5" cy="10.2" r="4" fill="none" stroke="#fff" stroke-width="2.4"/></svg>
<div id="t58" class="t" style="left:971px;top:512.34px;font-size:18.5px;color:#333;font-weight:400;letter-spacing:-0.612px;">GMT+08_2022-06-06_0100</div>
<div class="a" style="left:920px;top:551px;width:618px;height:1px;background:#d6d6d6;"></div>
<div class="a" style="left:920px;top:553px;width:618px;height:42px;background:#f3f3f3;"></div>
<div class="a" style="left:934px;top:565px;width:18px;height:18px;background:#fff;border:2px solid #333"></div>
<svg style="left:976px;top:565px;" width="24" height="20" viewBox="0 0 24 20"><path d="M0.5,1 h8.5 l2,2.5 h12.5 v14.5 h-23 z" fill="#fbab14"/></svg>
<div id="t59" class="t" style="left:1023px;top:563.65px;font-size:20.5px;color:#333;font-weight:400;letter-spacing:-0.918px;">.@app_center</div>
<div class="a" style="left:920px;top:595px;width:618px;height:42px;background:#fbfbfb;"></div>
<div class="a" style="left:934px;top:607px;width:18px;height:18px;background:#fff;border:2px solid #333"></div>
<svg style="left:976px;top:607px;" width="24" height="20" viewBox="0 0 24 20"><path d="M0.5,1 h8.5 l2,2.5 h12.5 v14.5 h-23 z" fill="#fbab14"/></svg>
<div id="t60" class="t" style="left:1023px;top:605.65px;font-size:20.5px;color:#333;font-weight:400;letter-spacing:-0.692px;">.@backup_code_signing</div>
<div class="a" style="left:920px;top:637px;width:618px;height:42px;background:#f3f3f3;"></div>
<div class="a" style="left:934px;top:649px;width:18px;height:18px;background:#fff;border:2px solid #333"></div>
<svg style="left:976px;top:649px;" width="24" height="20" viewBox="0 0 24 20"><path d="M0.5,1 h8.5 l2,2.5 h12.5 v14.5 h-23 z" fill="#fbab14"/></svg>
<div id="t61" class="t" style="left:1023px;top:647.65px;font-size:20.5px;color:#333;font-weight:400;letter-spacing:-0.623px;">.@backup_config</div>
<div class="a" style="left:920px;top:679px;width:618px;height:42px;background:#fbfbfb;"></div>
<div class="a" style="left:934px;top:691px;width:18px;height:18px;background:#fff;border:2px solid #333"></div>
<svg style="left:976px;top:691px;" width="24" height="20" viewBox="0 0 24 20"><path d="M0.5,1 h8.5 l2,2.5 h12.5 v14.5 h-23 z" fill="#fbab14"/></svg>
<div id="t62" class="t" style="left:1023px;top:689.65px;font-size:20.5px;color:#333;font-weight:400;letter-spacing:-0.872px;">.@backup_qbox</div>
<div class="a" style="left:920px;top:721px;width:618px;height:42px;background:#f3f3f3;"></div>
<div class="a" style="left:934px;top:733px;width:18px;height:18px;background:#fff;border:2px solid #333"></div>
<svg style="left:976px;top:733px;" width="24" height="20" viewBox="0 0 24 20"><path d="M0.5,1 h8.5 l2,2.5 h12.5 v14.5 h-23 z" fill="#fbab14"/></svg>
<div id="t63" class="t" style="left:1023px;top:731.65px;font-size:20.5px;color:#333;font-weight:400;letter-spacing:-0.474px;">.@qmonitor</div>
<div class="a" style="left:920px;top:763px;width:618px;height:42px;background:#fbfbfb;"></div>
<div class="a" style="left:934px;top:775px;width:18px;height:18px;background:#fff;border:2px solid #333"></div>
<svg style="left:976px;top:775px;" width="24" height="20" viewBox="0 0 24 20"><path d="M0.5,1 h8.5 l2,2.5 h12.5 v14.5 h-23 z" fill="#fbab14"/></svg>
<div id="t64" class="t" style="left:1023px;top:773.65px;font-size:20.5px;color:#333;font-weight:400;letter-spacing:-0.782px;">.@upload_cache</div>
<div class="a" style="left:920px;top:805px;width:618px;height:42px;background:#f3f3f3;"></div>
<div class="a" style="left:934px;top:817px;width:18px;height:18px;background:#fff;border:2px solid #333"></div>
<svg style="left:976px;top:817px;" width="24" height="20" viewBox="0 0 24 20"><path d="M0.5,1 h8.5 l2,2.5 h12.5 v14.5 h-23 z" fill="#fbab14"/></svg>
<div id="t65" class="t" style="left:1023px;top:815.65px;font-size:20.5px;color:#333;font-weight:400;letter-spacing:-0.115px;">.antivirus</div>
<div class="a" style="left:920px;top:847px;width:618px;height:42px;background:#fbfbfb;"></div>
<div class="a" style="left:934px;top:859px;width:18px;height:18px;background:#fff;border:2px solid #333"></div>
<svg style="left:976px;top:859px;" width="24" height="20" viewBox="0 0 24 20"><path d="M0.5,1 h8.5 l2,2.5 h12.5 v14.5 h-23 z" fill="#fbab14"/></svg>
<div id="t66" class="t" style="left:1023px;top:857.65px;font-size:20.5px;color:#333;font-weight:400;letter-spacing:-0.284px;">.codesigning</div>
<div class="a" style="left:920px;top:894px;width:618px;height:1px;background:#d8d8d8;"></div>
<svg style="left:938px;top:914px;" width="24" height="18" viewBox="0 0 24 18"><rect x="2" y="2" width="2.5" height="13" fill="#d0d0d0"/><path d="M12,2 L5,8.5 L12,15 Z M20,2 L13,8.5 L20,15 Z" fill="#d0d0d0"/></svg>
<svg style="left:974px;top:914px;" width="18" height="18" viewBox="0 0 18 18"><path d="M14,2 L5,8.5 L14,15 Z" fill="#d0d0d0"/></svg>
<div class="a" style="left:1015px;top:913px;width:2px;height:20px;background:#888;"></div>
<div class="a" style="left:1034px;top:904px;width:78px;height:39px;background:#fff;border:1px solid #dcdcdc"></div>
<div id="t67" class="t" style="left:1050px;top:913.92px;font-size:19px;color:#1a78e6;font-weight:400;">1</div>
<div id="t68" class="t" style="left:1115px;top:913.92px;font-size:19px;color:#444;font-weight:400;letter-spacing:0.141px;">/1</div>
<div class="a" style="left:1152px;top:913px;width:2px;height:20px;background:#888;"></div>
<svg style="left:1180px;top:914px;" width="18" height="18" viewBox="0 0 18 18"><path d="M3,2 L12,8.5 L3,15 Z" fill="#d0d0d0"/></svg>
<svg style="left:1210px;top:914px;" width="24" height="18" viewBox="0 0 24 18"><path d="M2,2 L9,8.5 L2,15 Z M10,2 L17,8.5 L10,15 Z" fill="#d0d0d0"/><rect x="18" y="2" width="2.5" height="13" fill="#d0d0d0"/></svg>
<div class="a" style="left:1254px;top:913px;width:2px;height:20px;background:#888;"></div>
<div id="t69" class="t" style="left:1274px;top:913.92px;font-size:19px;color:#444;font-weight:400;letter-spacing:-1.177px;">Show</div>
<div class="a" style="left:1327px;top:904px;width:78px;height:39px;background:#fff;border:2px solid #222"></div>
<div id="t70" class="t" style="left:1344px;top:913.92px;font-size:19px;color:#1a78e6;font-weight:400;letter-spacing:-2.141px;">50</div>
<svg style="left:1376px;top:918px;" width="13" height="10" viewBox="0 0 13 10"><path d="M0,0 H12 L6,8 Z" fill="#333"/></svg>
<div id="t71" class="t" style="left:1413px;top:913.92px;font-size:19px;color:#444;font-weight:400;letter-spacing:-0.352px;">Item(s)</div>
<div id="t72" class="t" style="left:1580px;top:468.22px;font-size:19px;color:#555;font-weight:400;letter-spacing:0.003px;">Taken:</div>
<div id="t73" class="t" style="left:1730px;top:455.22px;font-size:19px;color:#333;font-weight:400;letter-spacing:0.089px;">2022-06-06</div>
<div id="t74" class="t" style="left:1730px;top:481.22px;font-size:19px;color:#333;font-weight:400;letter-spacing:0.290px;">01:00:02</div>
<div id="t75" class="t" style="left:1580px;top:522.22px;font-size:19px;color:#555;font-weight:400;letter-spacing:0.194px;">Replicated:</div>
<div id="t76" class="t" style="left:1730px;top:522.22px;font-size:19px;color:#333;font-weight:400;letter-spacing:-0.297px;">No</div>
<div id="t77" class="t" style="left:1580px;top:558.12px;font-size:19px;color:#555;font-weight:400;letter-spacing:0.457px;">Retention</div>
<div id="t78" class="t" style="left:1580px;top:583.92px;font-size:19px;color:#555;font-weight:400;letter-spacing:0.005px;">Policy:</div>
<div id="t79" class="t" style="left:1730px;top:571.92px;font-size:19px;color:#2c2cd6;font-weight:400;letter-spacing:0.354px;text-decoration:underline;text-underline-offset:2px">Smart Versioning</div>
<div id="t80" class="t" style="left:1580px;top:659.92px;font-size:19px;color:#555;font-weight:400;letter-spacing:0.307px;">Status:</div>
<svg style="left:1734px;top:655px;" width="34" height="26" viewBox="0 0 34 26"><path d="M3,12 L12,21 L31,3" fill="none" stroke="#3aaa3a" stroke-width="3.2"/></svg>
<div id="t81" class="t" style="left:1777px;top:659.92px;font-size:19px;color:#3aaa3a;font-weight:400;letter-spacing:-0.230px;">Ready</div>
<div id="t82" class="t" style="left:1580px;top:712.92px;font-size:19px;color:#555;font-weight:400;letter-spacing:-0.025px;">Capacity:</div>
<div id="t83" class="t" style="left:1730px;top:712.92px;font-size:19px;color:#333;font-weight:400;letter-spacing:-0.326px;">16.35 GB</div>
<div id="t84" class="t" style="left:1580px;top:807.92px;font-size:19px;color:#555;font-weight:400;letter-spacing:-0.393px;">Description:</div>
<svg style="left:1690px;top:800px;" width="32" height="30" viewBox="0 0 32 30"><path d="M15,6 H4 V26 H24 V15" fill="none" stroke="#555" stroke-width="2"/><path d="M11,19 l1,-4.5 l11,-11 l3.5,3.5 l-11,11 z" fill="none" stroke="#555" stroke-width="2" stroke-linejoin="round"/></svg>
<div id="t85" class="t" style="left:1597px;top:845.34px;font-size:18.5px;color:#333;font-weight:400;letter-spacing:-0.097px;">No description</div>
<div class="a" style="left:324px;top:990px;width:1596px;height:1px;background:#d0d0d0;"></div>
<div class="a" style="left:324px;top:991px;width:1596px;height:76px;background:#f9f9f9;"></div>
<div class="a" style="left:1148px;top:1007px;width:186px;height:45px;background:#1a91f8;border-radius:23px"></div>
<div id="t86" class="t" style="left:1197px;top:1019.38px;font-size:22px;color:#fff;font-weight:400;letter-spacing:-0.674px;">Restore</div>
<svg style="left:1284px;top:1024px;" width="13" height="10" viewBox="0 0 13 10"><path d="M0,0 H12 L6,8 Z" fill="#fff"/></svg>
<div class="a" style="left:1371px;top:1007px;width:186px;height:45px;background:#1a91f8;border-radius:23px"></div>
<div id="t87" class="t" style="left:1437px;top:1019.38px;font-size:22px;color:#fff;font-weight:400;letter-spacing:-0.871px;">Clone</div>
<div class="a" style="left:1595px;top:1007px;width:304px;height:45px;background:#1a91f8;border-radius:23px"></div>
<div id="t88" class="t" style="left:1633px;top:1019.38px;font-size:22px;color:#fff;font-weight:400;letter-spacing:-0.392px;">Revert volume snapshot</div>
</body></html>
